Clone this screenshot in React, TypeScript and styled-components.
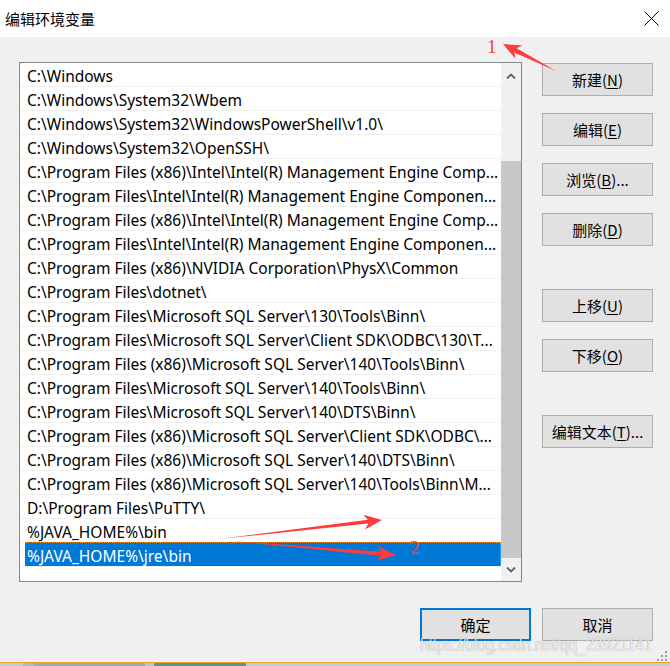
import React from "react";
import styled, { createGlobalStyle } from "styled-components";

const GlobalStyle = createGlobalStyle`
  html, body {
    margin: 0;
    padding: 0;
    background: #f0f0f0;
  }
  body {
    font-family: "Noto Sans", "Noto Sans CJK SC", sans-serif;
  }
`;

const Page = styled.div`
  position: relative;
  width: 670px;
  height: 666px;
  overflow: hidden;
  display: flex;
  flex-direction: column;
`;

const Window = styled.div`
  height: 662px;
  display: flex;
  flex-direction: column;
  background: #f0f0f0;
`;

const TitleBar = styled.div`
  height: 37px;
  flex-shrink: 0;
  background: #ffffff;
  display: flex;
  align-items: center;
  justify-content: space-between;
  padding: 0 11px 0 5px;
`;

const Title = styled.span`
  font-family: "Noto Sans CJK SC", sans-serif;
  font-size: 15px;
  color: #000;
  margin-top: -1px;
`;

const Body = styled.div`
  display: flex;
  flex-direction: row;
  padding: 25px 17px 0 19px;
`;

const ListBox = styled.div`
  width: 503px;
  height: 520px;
  box-sizing: border-box;
  border: 1px solid #828790;
  background: #ffffff;
  display: flex;
  flex-direction: row;
`;

const Rows = styled.div`
  width: 481px;
  display: flex;
  flex-direction: column;
`;

const Row = styled.div<{ $selected?: boolean }>`
  height: 23px;
  flex-shrink: 0;
  border-bottom: 1px solid #f0f0f0;
  display: flex;
  align-items: stretch;
  padding-left: ${(p) => (p.$selected ? "5px" : "0")};
`;

const RowText = styled.div<{ $selected?: boolean }>`
  flex: 1;
  display: flex;
  align-items: center;
  padding-left: ${(p) => (p.$selected ? "2px" : "7px")};
  padding-top: 2px;
  font-family: "Noto Sans", "Noto Sans CJK SC", sans-serif;
  font-size: 15.5px;
  white-space: nowrap;
  overflow: hidden;
  color: ${(p) => (p.$selected ? "#ffffff" : "#000000")};
  background: ${(p) => (p.$selected ? "#0078d7" : "transparent")};
  border-top: ${(p) => (p.$selected ? "1px dotted #f0902c" : "none")};
  border-right: ${(p) => (p.$selected ? "1px dotted #f0902c" : "none")};
  margin-top: ${(p) => (p.$selected ? "-1px" : "0")};
`;

const ScrollBar = styled.div`
  width: 20px;
  display: flex;
  flex-direction: column;
  background: #f0f0f0;
`;

const ArrowCell = styled.div<{ $h: number }>`
  height: ${(p) => p.$h}px;
  flex-shrink: 0;
  display: flex;
  align-items: center;
  justify-content: center;
`;

const Track = styled.div`
  flex: 1;
  display: flex;
  flex-direction: column;
`;

const Thumb = styled.div`
  background: #c8c8c8;
  width: 100%;
`;

const ButtonColumn = styled.div`
  margin-left: 20px;
  padding-top: 1px;
  display: flex;
  flex-direction: column;
  gap: 43px;
`;

const ButtonGroup = styled.div`
  display: flex;
  flex-direction: column;
  gap: 17px;
`;

const Button = styled.button<{ $default?: boolean }>`
  width: 111px;
  height: 33px;
  box-sizing: border-box;
  margin: 0;
  padding: 0;
  background: #e1e1e1;
  border: ${(p) => (p.$default ? "2px solid #0078d7" : "1px solid #adadad")};
  font-family: "Noto Sans CJK SC", sans-serif;
  font-size: 15px;
  color: #000;
  display: flex;
  align-items: center;
  justify-content: center;
  u {
    text-decoration-thickness: 1px;
    text-underline-offset: 2px;
  }
`;

const Footer = styled.div`
  margin-top: 26px;
  display: flex;
  justify-content: flex-end;
  gap: 11px;
  padding-right: 17px;
`;

const OrangeLine = styled.div`
  height: 1px;
  background: #e8a13a;
`;

const Taskbar = styled.div`
  height: 3px;
  display: flex;
  background: #c9c9c9;
`;

const TaskSeg = styled.div<{ $w: number; $c: string }>`
  width: ${(p) => p.$w}px;
  background: ${(p) => p.$c};
`;

const Watermark = styled.div`
  position: absolute;
  left: 420px;
  top: 634px;
  font-family: "Liberation Sans", sans-serif;
  font-size: 19px;
  color: rgba(255, 255, 255, 0.85);
  text-shadow: 0 0 1px rgba(0, 0, 0, 0.45);
  white-space: nowrap;
  transform: scaleX(0.8);
  transform-origin: left top;
  pointer-events: none;
`;

const Overlay = styled.svg`
  position: absolute;
  left: 0;
  top: 0;
  pointer-events: none;
`;

const Grip = styled.svg`
  position: absolute;
  left: 656px;
  top: 650px;
`;

const paths = [
  "C:\\Windows",
  "C:\\Windows\\System32\\Wbem",
  "C:\\Windows\\System32\\WindowsPowerShell\\v1.0\\",
  "C:\\Windows\\System32\\OpenSSH\\",
  "C:\\Program Files (x86)\\Intel\\Intel(R) Management Engine Comp...",
  "C:\\Program Files\\Intel\\Intel(R) Management Engine Componen...",
  "C:\\Program Files (x86)\\Intel\\Intel(R) Management Engine Comp...",
  "C:\\Program Files\\Intel\\Intel(R) Management Engine Componen...",
  "C:\\Program Files (x86)\\NVIDIA Corporation\\PhysX\\Common",
  "C:\\Program Files\\dotnet\\",
  "C:\\Program Files\\Microsoft SQL Server\\130\\Tools\\Binn\\",
  "C:\\Program Files\\Microsoft SQL Server\\Client SDK\\ODBC\\130\\T...",
  "C:\\Program Files (x86)\\Microsoft SQL Server\\140\\Tools\\Binn\\",
  "C:\\Program Files\\Microsoft SQL Server\\140\\Tools\\Binn\\",
  "C:\\Program Files\\Microsoft SQL Server\\140\\DTS\\Binn\\",
  "C:\\Program Files (x86)\\Microsoft SQL Server\\Client SDK\\ODBC\\...",
  "C:\\Program Files (x86)\\Microsoft SQL Server\\140\\DTS\\Binn\\",
  "C:\\Program Files (x86)\\Microsoft SQL Server\\140\\Tools\\Binn\\M...",
  "D:\\Program Files\\PuTTY\\",
  "%JAVA_HOME%\\bin",
  "%JAVA_HOME%\\jre\\bin",
];
const selectedIndex = 20;

// tapered annotation arrow, tail -> tip
const arrowPoints = (
  x1: number,
  y1: number,
  x2: number,
  y2: number,
  head = 18,
  headW = 15,
  neckW = 5
) => {
  const dx = x2 - x1;
  const dy = y2 - y1;
  const len = Math.hypot(dx, dy);
  const ux = dx / len;
  const uy = dy / len;
  const nx = -uy;
  const ny = ux;
  const bx = x2 - ux * head;
  const by = y2 - uy * head;
  const kx = bx + ux * 4;
  const ky = by + uy * 4;
  const pts = [
    [x1, y1],
    [kx + (nx * neckW) / 2, ky + (ny * neckW) / 2],
    [bx + (nx * headW) / 2, by + (ny * headW) / 2],
    [x2, y2],
    [bx - (nx * headW) / 2, by - (ny * headW) / 2],
    [kx - (nx * neckW) / 2, ky - (ny * neckW) / 2],
  ];
  return pts.map((p) => p.join(",")).join(" ");
};

const Chevron = ({ up }: { up?: boolean }) => (
  <svg width="10" height="6" viewBox="0 0 10 6">
    <path
      d={up ? "M1 5.5 L5 1.5 L9 5.5" : "M1 0.5 L5 4.5 L9 0.5"}
      fill="none"
      stroke="#606060"
      strokeWidth="1.8"
    />
  </svg>
);

const Mn = ({ label, k, tail = "" }: { label: string; k: string; tail?: string }) => (
  <span>
    {label}(<u>{k}</u>){tail}
  </span>
);

const App: React.FC = () => {
  const thumbTop = 72;
  const thumbHeight = 397;

  return (
    <Page>
      <GlobalStyle />
      <Window>
        <TitleBar>
          <Title>编辑环境变量</Title>
          <svg width="15" height="15" viewBox="0 0 15 15">
            <path d="M0.5 0.5 L14.5 14.5 M14.5 0.5 L0.5 14.5" stroke="#000" strokeWidth="1" />
          </svg>
        </TitleBar>
        <Body>
          <ListBox>
            <Rows>
              {paths.map((p, i) => (
                <Row key={i} $selected={i === selectedIndex}>
                  <RowText $selected={i === selectedIndex}>{p}</RowText>
                </Row>
              ))}
            </Rows>
            <ScrollBar>
              <ArrowCell $h={26}>
                <Chevron up />
              </ArrowCell>
              <Track>
                <Thumb style={{ marginTop: thumbTop, height: thumbHeight }} />
              </Track>
              <ArrowCell $h={22}>
                <Chevron />
              </ArrowCell>
            </ScrollBar>
          </ListBox>
          <ButtonColumn>
            <ButtonGroup>
              <Button><Mn label="新建" k="N" /></Button>
              <Button><Mn label="编辑" k="E" /></Button>
              <Button><Mn label="浏览" k="B" tail="..." /></Button>
              <Button><Mn label="删除" k="D" /></Button>
            </ButtonGroup>
            <ButtonGroup>
              <Button><Mn label="上移" k="U" /></Button>
              <Button><Mn label="下移" k="O" /></Button>
            </ButtonGroup>
            <ButtonGroup>
              <Button><Mn label="编辑文本" k="T" tail="..." /></Button>
            </ButtonGroup>
          </ButtonColumn>
        </Body>
        <Footer>
          <Button $default>确定</Button>
          <Button>取消</Button>
        </Footer>
      </Window>
      <OrangeLine />
      <Taskbar>
        <TaskSeg $w={23} $c="#c9c9c9" />
        <TaskSeg $w={11} $c="#b8b8b8" />
        <TaskSeg $w={111} $c="#a8a8a8" />
        <TaskSeg $w={9} $c="#c4c4c4" />
        <TaskSeg $w={92} $c="#6b8f7f" />
      </Taskbar>

      <Watermark>https://blog.csdn.net/qq_23921141</Watermark>
      <Grip width="12" height="12" viewBox="0 0 12 12">
        {[
          [9, 1],
          [5, 5],
          [9, 5],
          [1, 9],
          [5, 9],
          [9, 9],
        ].map(([x, y], i) => (
          <rect key={i} x={x} y={y} width="2" height="2" fill="#a0a0a0" />
        ))}
      </Grip>

      <Overlay width="670" height="666" viewBox="0 0 670 666">
        <polygon points={arrowPoints(556, 71, 503, 44)} fill="#ff3b3b" />
        <text x="487" y="53" fill="#ff3b3b" fontFamily="'Liberation Serif', serif" fontSize="19">
          1
        </text>
        <polygon points={arrowPoints(219, 539, 382, 520, 18, 15, 4)} fill="#ff3b3b" />
        <polygon points={arrowPoints(232, 541, 396, 555, 19, 15, 4)} fill="#ff3b3b" />
        <text x="410" y="554" fill="#ff3b3b" fontFamily="'Liberation Serif', serif" fontSize="19">
          2
        </text>
      </Overlay>
    </Page>
  );
};

export default App;
